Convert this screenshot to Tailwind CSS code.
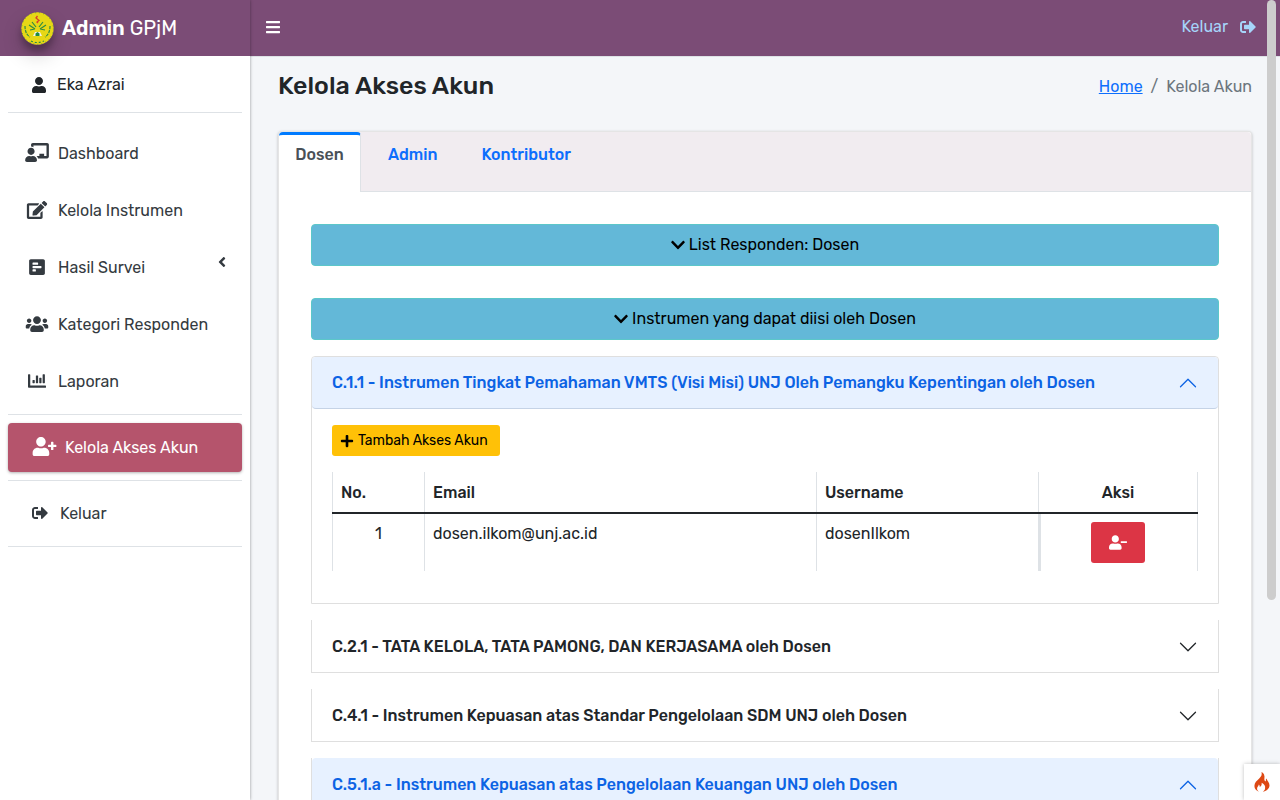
<!DOCTYPE html>
<html lang="id">
<head>
<meta charset="utf-8">
<meta name="viewport" content="width=device-width, initial-scale=1">
<title>Admin GPjM - Kelola Akses Akun</title>
<script src="https://cdn.jsdelivr.net/npm/@tailwindcss/browser@4"></script>
</head>
<body class="h-screen overflow-hidden bg-[#f4f6f9] font-[Rubik,Roboto,sans-serif] text-base leading-6 text-[#212529]">

<svg class="hidden" aria-hidden="true">
  <symbol id="i-user" viewBox="0 0 448 512"><path d="M224 256c70.7 0 128-57.3 128-128S294.7 0 224 0 96 57.3 96 128s57.3 128 128 128zm89.6 32h-16.7c-22.2 10.2-46.9 16-72.9 16s-50.6-5.8-72.9-16h-16.7C60.2 288 0 348.2 0 422.4V464c0 26.5 21.5 48 48 48h352c26.5 0 48-21.5 48-48v-41.6c0-74.2-60.2-134.4-134.4-134.4z"/></symbol>
  <symbol id="i-user-plus" viewBox="0 0 640 512"><path d="M624 208h-64v-64c0-8.8-7.2-16-16-16h-32c-8.8 0-16 7.2-16 16v64h-64c-8.8 0-16 7.2-16 16v32c0 8.8 7.2 16 16 16h64v64c0 8.8 7.2 16 16 16h32c8.8 0 16-7.2 16-16v-64h64c8.8 0 16-7.2 16-16v-32c0-8.8-7.2-16-16-16zm-400 48c70.7 0 128-57.3 128-128S294.7 0 224 0 96 57.3 96 128s57.3 128 128 128zm89.6 32h-16.7c-22.2 10.2-46.9 16-72.9 16s-50.6-5.8-72.9-16h-16.7C60.2 288 0 348.2 0 422.4V464c0 26.5 21.5 48 48 48h352c26.5 0 48-21.5 48-48v-41.6c0-74.2-60.2-134.4-134.4-134.4z"/></symbol>
  <symbol id="i-user-minus" viewBox="0 0 640 512"><path d="M624 208H432c-8.8 0-16 7.2-16 16v32c0 8.8 7.2 16 16 16h192c8.8 0 16-7.2 16-16v-32c0-8.8-7.2-16-16-16zm-400 48c70.7 0 128-57.3 128-128S294.7 0 224 0 96 57.3 96 128s57.3 128 128 128zm89.6 32h-16.7c-22.2 10.2-46.9 16-72.9 16s-50.6-5.8-72.9-16h-16.7C60.2 288 0 348.2 0 422.4V464c0 26.5 21.5 48 48 48h352c26.5 0 48-21.5 48-48v-41.6c0-74.2-60.2-134.4-134.4-134.4z"/></symbol>
  <symbol id="i-users" viewBox="0 0 640 512"><path d="M96 224c35.3 0 64-28.7 64-64s-28.7-64-64-64-64 28.7-64 64 28.7 64 64 64zm448 0c35.3 0 64-28.7 64-64s-28.7-64-64-64-64 28.7-64 64 28.7 64 64 64zm32 32h-64c-17.6 0-33.5 7.1-45.1 18.6 40.3 22.1 68.9 62 75.1 109.4h66c17.7 0 32-14.3 32-32v-32c0-35.3-28.7-64-64-64zm-256 0c61.9 0 112-50.1 112-112S381.9 32 320 32 208 82.1 208 144s50.1 112 112 112zm76.8 32h-8.3c-20.8 10-43.9 16-68.5 16s-47.6-6-68.5-16h-8.3C179.6 288 128 339.6 128 403.2V432c0 26.5 21.5 48 48 48h288c26.5 0 48-21.5 48-48v-28.8c0-63.6-51.6-115.2-115.2-115.2zm-223.7-13.4C161.5 263.1 145.6 256 128 256H64c-35.3 0-64 28.7-64 64v32c0 17.7 14.3 32 32 32h65.9c6.3-47.4 34.9-87.3 75.2-109.4z"/></symbol>
  <symbol id="i-out" viewBox="0 0 512 512"><path d="M497 273L329 441c-15 15-41 4.5-41-17v-96H152c-13.3 0-24-10.7-24-24v-96c0-13.3 10.7-24 24-24h136V88c0-21.4 25.9-32 41-17l168 168c9.3 9.4 9.3 24.6 0 34zM192 436v-40c0-6.6-5.4-12-12-12H96c-17.7 0-32-14.3-32-32V160c0-17.7 14.3-32 32-32h84c6.6 0 12-5.4 12-12V76c0-6.6-5.4-12-12-12H96c-53 0-96 43-96 96v192c0 53 43 96 96 96h84c6.6 0 12-5.4 12-12z"/></symbol>
  <symbol id="i-bars" viewBox="0 0 448 512"><path d="M16 132h416c8.8 0 16-7.2 16-16V76c0-8.8-7.2-16-16-16H16C7.2 60 0 67.2 0 76v40c0 8.8 7.2 16 16 16zm0 160h416c8.8 0 16-7.2 16-16v-40c0-8.8-7.2-16-16-16H16c-8.8 0-16 7.2-16 16v40c0 8.8 7.2 16 16 16zm0 160h416c8.8 0 16-7.2 16-16v-40c0-8.8-7.2-16-16-16H16c-8.8 0-16 7.2-16 16v40c0 8.8 7.2 16 16 16z"/></symbol>
  <symbol id="i-edit" viewBox="0 0 576 512"><path d="M402.6 83.2l90.2 90.2c3.8 3.8 3.8 10 0 13.8L274.4 405.6l-92.8 10.3c-12.4 1.4-22.9-9.1-21.5-21.5l10.3-92.8L388.8 83.2c3.8-3.8 10-3.8 13.8 0zm162-22.9l-48.8-48.8c-15.2-15.2-39.9-15.2-55.2 0l-35.4 35.4c-3.8 3.8-3.8 10 0 13.8l90.2 90.2c3.8 3.8 10 3.8 13.8 0l35.4-35.4c15.2-15.3 15.2-40 0-55.2zM384 346.2V448H64V128h229.8c3.2 0 6.2-1.3 8.5-3.5l40-40c7.6-7.6 2.2-20.5-8.5-20.5H48C21.5 64 0 85.5 0 112v352c0 26.5 21.5 48 48 48h352c26.5 0 48-21.5 48-48V306.2c0-10.7-12.9-16-20.5-8.5l-40 40c-2.2 2.3-3.5 5.3-3.5 8.5z"/></symbol>
  <symbol id="i-teacher" viewBox="0 0 640 512"><path d="M208 352c-2.39 0-4.78.35-7.06 1.09C187.98 357.3 174.35 360 160 360c-14.35 0-27.98-2.7-40.95-6.91-2.28-.74-4.66-1.09-7.05-1.09C49.94 352-.33 402.48 0 464.62.14 490.88 21.73 512 48 512h224c26.27 0 47.86-21.12 48-47.38.33-62.14-49.94-112.62-112-112.62zm-48-32c53.02 0 96-42.98 96-96s-42.98-96-96-96-96 42.98-96 96 42.98 96 96 96zM592 0H208c-26.47 0-48 22.25-48 49.59V96c23.42 0 45.1 6.78 64 17.8V64h352v288h-64v-64H384v64h-76.24c19.1 16.69 33.12 38.73 39.69 64H592c26.47 0 48-22.25 48-49.59V49.59C640 22.25 618.47 0 592 0z"/></symbol>
  <symbol id="i-poll" viewBox="0 0 448 512"><path d="M448 432V80c0-26.5-21.5-48-48-48H48C21.5 32 0 53.5 0 80v352c0 26.5 21.5 48 48 48h352c26.5 0 48-21.5 48-48zM112 192c-8.84 0-16-7.16-16-16v-32c0-8.84 7.16-16 16-16h128c8.84 0 16 7.16 16 16v32c0 8.84-7.16 16-16 16H112zm0 96c-8.84 0-16-7.16-16-16v-32c0-8.84 7.16-16 16-16h224c8.84 0 16 7.16 16 16v32c0 8.84-7.16 16-16 16H112zm0 96c-8.84 0-16-7.16-16-16v-32c0-8.84 7.16-16 16-16h64c8.84 0 16 7.16 16 16v32c0 8.84-7.16 16-16 16h-64z"/></symbol>
  <symbol id="i-chart" viewBox="0 0 512 512"><path d="M332.8 320h38.4c6.4 0 12.8-6.4 12.8-12.8V172.8c0-6.4-6.4-12.8-12.8-12.8h-38.4c-6.4 0-12.8 6.4-12.8 12.8v134.4c0 6.4 6.4 12.8 12.8 12.8zm96 0h38.4c6.4 0 12.8-6.4 12.8-12.8V76.8c0-6.4-6.4-12.8-12.8-12.8h-38.4c-6.4 0-12.8 6.4-12.8 12.8v230.4c0 6.4 6.4 12.8 12.8 12.8zm-288 0h38.4c6.4 0 12.8-6.4 12.8-12.8v-70.4c0-6.4-6.4-12.8-12.8-12.8h-38.4c-6.4 0-12.8 6.4-12.8 12.8v70.4c0 6.4 6.4 12.8 12.8 12.8zm96 0h38.4c6.4 0 12.8-6.4 12.8-12.8V108.8c0-6.4-6.4-12.8-12.8-12.8h-38.4c-6.4 0-12.8 6.4-12.8 12.8v198.4c0 6.4 6.4 12.8 12.8 12.8zM496 384H64V80c0-8.84-7.16-16-16-16H16C7.16 64 0 71.16 0 80v336c0 17.67 14.33 32 32 32h464c8.84 0 16-7.16 16-16v-32c0-8.84-7.16-16-16-16z"/></symbol>
  <symbol id="i-left" viewBox="0 0 256 512"><path d="M31.7 239l136-136c9.4-9.4 24.6-9.4 33.9 0l22.6 22.6c9.4 9.4 9.4 24.6 0 33.9L127.9 256l96.4 96.4c9.4 9.4 9.4 24.6 0 33.9L201.7 409c-9.4 9.4-24.6 9.4-33.9 0l-136-136c-9.5-9.4-9.5-24.6-.1-34z"/></symbol>
  <symbol id="i-down" viewBox="0 0 448 512"><path d="M207 381.5L12.7 187.1c-9.4-9.4-9.4-24.6 0-33.9l22.7-22.7c9.4-9.4 24.5-9.4 33.9 0L224 284.5l154.7-154c9.4-9.3 24.5-9.3 33.9 0l22.7 22.7c9.4 9.4 9.4 24.6 0 33.9L241 381.5c-9.4 9.4-24.6 9.4-34 0z"/></symbol>
  <symbol id="i-plus" viewBox="0 0 448 512"><path d="M416 208H272V64c0-17.67-14.33-32-32-32h-32c-17.67 0-32 14.33-32 32v144H32c-17.67 0-32 14.33-32 32v32c0 17.67 14.33 32 32 32h144v144c0 17.67 14.33 32 32 32h32c17.67 0 32-14.33 32-32V304h144c17.67 0 32-14.33 32-32v-32c0-17.67-14.33-32-32-32z"/></symbol>
  <symbol id="i-chev" viewBox="0 0 16 16"><path d="M1.646 4.646a.5.5 0 0 1 .708 0L8 10.293l5.646-5.647a.5.5 0 0 1 .708.708l-6 6a.5.5 0 0 1-.708 0l-6-6a.5.5 0 0 1 0-.708z"/></symbol>
</svg>

<div class="flex h-full">
  <!-- Sidebar -->
  <aside class="relative z-10 flex w-[250px] shrink-0 flex-col bg-white shadow-[0_0_3px_rgba(0,0,0,0.4)]">
    <a href="#" class="flex h-14 shrink-0 items-center gap-2 bg-[#7b4c76] pl-[21px] text-xl text-white">
      <svg class="size-[33px] rounded-full shadow-[0_10px_20px_rgba(0,0,0,0.19),0_6px_6px_rgba(0,0,0,0.23)]" viewBox="0 0 33 33">
        <circle cx="16.5" cy="16.5" r="16.2" fill="#e6d716"/>
        <circle cx="16.5" cy="16.5" r="15.9" fill="none" stroke="#5c9a3c" stroke-width="1" stroke-dasharray="1 3"/>
        <g fill="none" stroke="#2c8a45" stroke-width="1.2">
          <path d="M11 10l4 5M8 13l6 4M9 18l5-1M22 10l-4 5M25 13l-6 4M24 18l-5-1"/>
          <path d="M4 14q0 8 5 11M29 14q0 8-5 11" stroke-dasharray="3 1"/>
          <path d="M10 29q6 3 13 0" stroke-dasharray="2 2"/>
        </g>
        <path d="M16.5 4l-1.500 2 3 2.500-2 1.500 1 1" fill="none" stroke="#d9402b" stroke-width="1.300"/>
        <path d="M12 24l2-4h5l2 4z" fill="#f4f4ea"/><path d="M14.500 24v-2.500l2-1.500 2 1.500V24z" fill="#1d8a44"/>
      </svg>
      <span><span class="font-semibold">Admin</span> GPjM</span>
    </a>
    <nav class="flex flex-col px-2 text-[#343a40]">
      <a href="#" class="flex h-[57px] items-center border-b border-[#dee2e6] pt-px pl-6 text-[#212529]"><svg class="mr-[11px] h-4 w-[14px] fill-current"><use href="#i-user"/></svg>Eka Azrai</a>
      <ul class="flex flex-col gap-2 border-b border-[#dee2e6] pt-4 pb-2">
        <li><a href="#" class="flex h-[49px] items-center gap-2 pl-4"><svg class="mb-0.5 h-[19px] w-[26px] fill-current"><use href="#i-teacher"/></svg>Dashboard</a></li>
        <li><a href="#" class="flex h-[49px] items-center gap-2 pl-4"><svg class="mb-0.5 h-[18px] w-[26px] fill-current"><use href="#i-edit"/></svg>Kelola Instrumen</a></li>
        <li><a href="#" class="flex h-[49px] items-center gap-2 pl-4"><svg class="mb-0.5 h-[18px] w-[26px] fill-current"><use href="#i-poll"/></svg><span class="grow">Hasil Survei</span><svg class="mr-4 mb-3 h-4 w-2 fill-current"><use href="#i-left"/></svg></a></li>
        <li><a href="#" class="flex h-[49px] items-center gap-2 pl-4"><svg class="mb-0.5 h-[18px] w-[26px] fill-current"><use href="#i-users"/></svg>Kategori Responden</a></li>
        <li><a href="#" class="flex h-[49px] items-center gap-2 pl-4"><svg class="mb-0.5 h-[18px] w-[26px] fill-current"><use href="#i-chart"/></svg>Laporan</a></li>
      </ul>
      <div class="border-b border-[#dee2e6] py-2">
        <a href="#" class="flex h-[49px] items-center gap-2 rounded bg-[#b5546c] pl-6 text-white shadow-[0_1px_3px_rgba(0,0,0,0.3)]"><svg class="mb-0.5 h-[19px] w-[25px] fill-current"><use href="#i-user-plus"/></svg>Kelola Akses Akun</a>
      </div>
      <a href="#" class="flex h-[66px] items-center gap-3 border-b border-[#dee2e6] pl-6"><svg class="mb-0.5 size-4 fill-current"><use href="#i-out"/></svg>Keluar</a>
    </nav>
  </aside>

  <div class="flex min-w-0 grow flex-col">
    <header class="flex h-[57px] shrink-0 items-center justify-between border-b border-[#dee2e6] bg-[#7b4c76] pr-6 pb-0.5 pl-4">
      <button type="button" aria-label="Menu" class="text-white"><svg class="h-4 w-[14px] fill-current"><use href="#i-bars"/></svg></button>
      <a href="#" class="flex items-center gap-3 text-[#a6d5fa]">Keluar<svg class="size-4 fill-current"><use href="#i-out"/></svg></a>
    </header>

    <main class="grow px-7 pt-[15px]">
      <div class="flex h-[59px] items-start justify-between">
        <h1 class="text-[25px] leading-7 font-medium">Kelola Akses Akun</h1>
        <nav aria-label="Breadcrumb" class="flex gap-2 pt-[3px] text-[#6c757d]"><a href="#" class="text-[#0d6efd] underline">Home</a><span>/</span><span>Kelola Akun</span></nav>
      </div>

      <section class="rounded border border-black/10 bg-white shadow-[0_1px_3px_rgba(0,0,0,0.25)]">
        <div role="tablist" class="flex h-[60px] rounded-t border-b border-[#dee2e6] bg-[#f1ecf0] font-medium">
          <button type="button" role="tab" aria-selected="true" class="-mb-px flex h-[60px] w-[82px] justify-center rounded-t border-t-[3px] border-r border-t-[#007bff] border-r-[#dee2e6] bg-white pt-2 text-[#495057]">Dosen</button>
          <button type="button" role="tab" class="ml-[27px] flex pt-[11px] text-[#0d6efd]">Admin</button>
          <button type="button" role="tab" class="ml-11 flex pt-[11px] text-[#0d6efd]">Kontributor</button>
        </div>

        <div class="flex flex-col px-8 pt-8">
          <button type="button" class="mb-8 flex h-[42px] items-center justify-center gap-1 rounded border border-[#5cc7c9] bg-[#63b8d8] text-black"><svg class="h-4 w-[14px] fill-current"><use href="#i-down"/></svg>List Responden: Dosen</button>
          <button type="button" class="mb-4 flex h-[42px] items-center justify-center gap-1 rounded border border-[#5cc7c9] bg-[#63b8d8] text-black"><svg class="h-4 w-[14px] fill-current"><use href="#i-down"/></svg>Instrumen yang dapat diisi oleh Dosen</button>

          <div class="flex flex-col gap-4">
            <article class="rounded-t border border-[#dfdfdf]">
              <button type="button" aria-expanded="true" class="flex h-[52px] w-full items-center justify-between rounded border-b border-[#c5d3e6] bg-[#e7f1ff] px-5 pt-px font-medium text-[#0c63e4]">C.1.1 - Instrumen Tingkat Pemahaman VMTS (Visi Misi) UNJ Oleh Pemangku Kepentingan oleh Dosen<svg class="size-5 rotate-180 fill-current"><use href="#i-chev"/></svg></button>
              <div class="px-5 pt-4 pb-8">
                <button type="button" class="mb-4 flex h-[31px] w-[168px] items-center gap-1 rounded-[3px] bg-[#ffc107] px-2 text-sm text-black"><svg class="h-[14px] w-[14px] fill-current"><use href="#i-plus"/></svg>Tambah Akses Akun</button>
                <table class="w-full table-fixed border-collapse">
                  <colgroup><col class="w-[92px]"><col><col class="w-[222px]"><col class="w-[159px]"></colgroup>
                  <thead>
                    <tr class="h-[41px] border-b-2 border-[#212529] text-left">
                      <th class="border-x border-x-[#dee2e6] px-2 pt-0.5 font-medium">No.</th>
                      <th class="border-x border-x-[#dee2e6] px-2 pt-0.5 font-medium">Email</th>
                      <th class="border-x border-x-[#dee2e6] px-2 pt-0.5 font-medium">Username</th>
                      <th class="border-x border-x-[#dee2e6] px-2 pt-0.5 text-center font-medium">Aksi</th>
                    </tr>
                  </thead>
                  <tbody>
                    <tr class="h-[58px] align-top">
                      <td class="border-x border-[#dee2e6] p-2 text-center">1</td>
                      <td class="border-x border-[#dee2e6] p-2">dosen.ilkom@unj.ac.id</td>
                      <td class="border-x border-[#dee2e6] p-2">dosenIlkom</td>
                      <td class="border-x border-[#dee2e6] p-2 shadow-[inset_2px_0_#dee2e6]"><button type="button" aria-label="Hapus akses akun" class="mx-auto flex h-[41px] w-[54px] items-center justify-center rounded-[3px] bg-[#dc3545] text-white"><svg class="h-[15px] w-[18px] fill-current"><use href="#i-user-minus"/></svg></button></td>
                    </tr>
                  </tbody>
                </table>
              </div>
            </article>
            <article class="border border-t-0 border-[#dfdfdf]"><button type="button" aria-expanded="false" class="flex h-[52px] w-full items-center justify-between px-5 pt-px font-medium">C.2.1 - TATA KELOLA, TATA PAMONG, DAN KERJASAMA oleh Dosen<svg class="size-5 fill-current"><use href="#i-chev"/></svg></button></article>
            <article class="border border-t-0 border-[#dfdfdf]"><button type="button" aria-expanded="false" class="flex h-[52px] w-full items-center justify-between px-5 pt-px font-medium">C.4.1 - Instrumen Kepuasan atas Standar Pengelolaan SDM UNJ oleh Dosen<svg class="size-5 fill-current"><use href="#i-chev"/></svg></button></article>
            <article class="border border-t-0 border-[#dfdfdf]"><button type="button" aria-expanded="true" class="flex h-[52px] w-full items-center justify-between rounded bg-[#e7f1ff] px-5 pt-px font-medium text-[#0c63e4]">C.5.1.a - Instrumen Kepuasan atas Pengelolaan Keuangan UNJ oleh Dosen<svg class="size-5 rotate-180 fill-current"><use href="#i-chev"/></svg></button></article>
          </div>
        </div>
      </section>
    </main>
  </div>
</div>

<!-- Overlay scrollbar thumb -->
<div class="fixed top-0 right-1 z-20 h-3/4 w-[9px] rounded-full bg-[#cdcdcd]"></div>

<!-- Debug toolbar toggle -->
<button type="button" aria-label="Debug toolbar" class="fixed right-0 bottom-0 z-30 flex size-9 items-center justify-center bg-white shadow-[0_0_4px_rgba(0,0,0,0.25)]">
  <svg class="h-5 w-4" viewBox="0 0 16 20"><path fill="#dd4814" d="M7.5 0c.8 3-.4 4.600-2.300 6.500C2.800 8.700.4 10.700.4 14c0 2.700 1.900 4.900 4.500 5.700-1.500-1-2.100-2.300-1.700-3.900.3-1.300 1.400-2 1.600-3.400.8.700 1.100 1.600.9 2.600 1.700-.9 2.300-2.600 1.900-4.300 2.400 1 4 3.100 3.500 5.500-.2 1.700-1 2.700-2.300 3.500 3.300-.6 6.500-2.800 6.700-6.300.1-2.900-2.400-4.300-3-6.900-.8.800-.8 1.800-.4 2.900-1.500-.4-2-1.600-1.700-3C10.900 3.600 9.900 1.200 7.500 0z"/></svg>
</button>
</body>
</html>
